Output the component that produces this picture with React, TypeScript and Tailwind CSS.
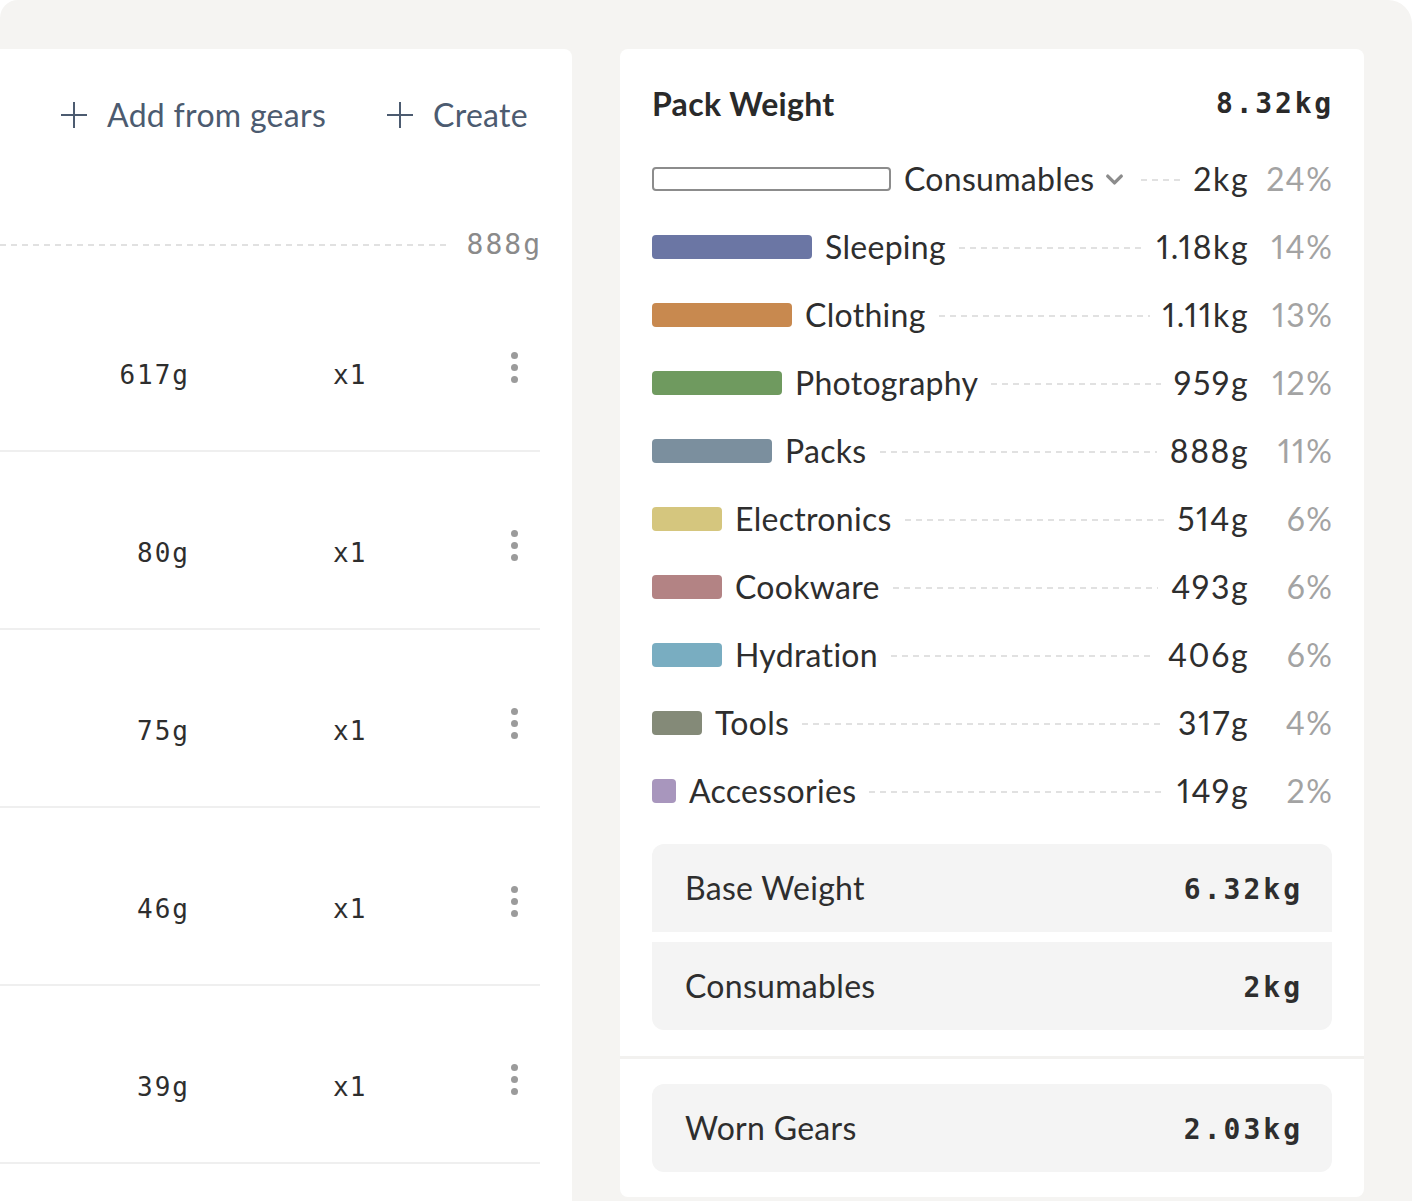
import { ChevronDown } from "lucide-react";

type Category = {
  name: string;
  width: number;
  color: string;
  weight: string;
  pct: string;
  outlined?: boolean;
};

const categories: Array<Category> = [
  { name: "Consumables", width: 239, color: "bg-white", weight: "2kg", pct: "24%", outlined: true },
  { name: "Sleeping", width: 160, color: "bg-[#6b76a4]", weight: "1.18kg", pct: "14%" },
  { name: "Clothing", width: 140, color: "bg-[#c8894f]", weight: "1.11kg", pct: "13%" },
  { name: "Photography", width: 130, color: "bg-[#6f9a5f]", weight: "959g", pct: "12%" },
  { name: "Packs", width: 120, color: "bg-[#7b8f9e]", weight: "888g", pct: "11%" },
  { name: "Electronics", width: 70, color: "bg-[#d5c67e]", weight: "514g", pct: "6%" },
  { name: "Cookware", width: 70, color: "bg-[#b38384]", weight: "493g", pct: "6%" },
  { name: "Hydration", width: 70, color: "bg-[#79adc1]", weight: "406g", pct: "6%" },
  { name: "Tools", width: 50, color: "bg-[#848a78]", weight: "317g", pct: "4%" },
  { name: "Accessories", width: 24, color: "bg-[#a896bd]", weight: "149g", pct: "2%" },
];

const gears = ["617g", "80g", "75g", "46g", "39g"];

const mono = "font-['DejaVu_Sans_Mono',monospace]";
const body = "text-[32px] tracking-[0.3px] proportional-nums";
const num = "text-[32px] tracking-[1.6px] proportional-nums";

const Dashes = ({ className = "" }: { className?: string }) => (
  <div
    className={`h-[2px] bg-[image:repeating-linear-gradient(to_right,#e1e1e1_0_6px,transparent_6px_11px)] ${className}`}
  />
);

const PlusIcon = () => (
  <svg width="28" height="28" viewBox="0 0 28 28" className="text-[#4c5b70]">
    <path d="M14 1v26M1 14h26" stroke="currentColor" strokeWidth="2" fill="none" />
  </svg>
);

const Kebab = () => (
  <div className="flex flex-col gap-[5px] mb-[16px]">
    <span className="w-[7px] h-[7px] rounded-full bg-[#9b9b9b]" />
    <span className="w-[7px] h-[7px] rounded-full bg-[#9b9b9b]" />
    <span className="w-[7px] h-[7px] rounded-full bg-[#9b9b9b]" />
  </div>
);

const GearList = () => (
  <div className="w-[572px] shrink-0 bg-white rounded-tr-lg">
    <div className="pt-[33px] pr-[44px] h-[99px] flex justify-end items-end">
      <div className={`h-[66px] flex items-center gap-[60px] ${body} text-[#4c5b70]`}>
        <button className="flex items-center gap-[19px]">
          <PlusIcon />
          <span>Add from gears</span>
        </button>
        <button className="flex items-center gap-[19px]">
          <PlusIcon />
          <span>Create</span>
        </button>
      </div>
    </div>
    <div className="mt-[72px] h-[50px] pr-[30px] flex items-center gap-[16px]">
      <Dashes className="flex-1" />
      <span className={`${mono} text-[28px] tracking-[2px] text-[#8a8a8a]`}>888g</span>
    </div>
    <div className="mt-[4px] mr-[32px]">
      {gears.map((g) => (
        <div
          key={g}
          className="h-[178px] border-b-2 border-[#efefef] pt-[26px] flex items-center"
        >
          <span className={`${mono} w-[190px] text-right text-[26px] tracking-[2px] text-[#2e2e2e]`}>
            {g}
          </span>
          <span className={`${mono} ml-[143px] text-[26px] tracking-[1px] text-[#2e2e2e]`}>x1</span>
          <div className="ml-auto w-[52px] flex justify-center">
            <Kebab />
          </div>
        </div>
      ))}
    </div>
  </div>
);

const CategoryRow = ({ c }: { c: Category }) => (
  <div className="h-[68px] flex items-center">
    <div
      className={`h-[24px] rounded-[4px] shrink-0 ${c.color} ${
        c.outlined ? "border-2 border-[#8c8c8c] h-[23px]" : ""
      }`}
      style={{ width: c.width }}
    />
    <span className={`ml-[13px] ${body} text-[#2e2e2e]`}>{c.name}</span>
    {c.outlined && (
      <ChevronDown size={27} strokeWidth={3} className="ml-[6px] text-[#8c8c8c] mt-[1px]" />
    )}
    <Dashes className="flex-1 mx-[13px] mt-[2px]" />
    <span className={`${num} text-[#2e2e2e] -mr-[1.6px]`}>{c.weight}</span>
    <span className={`w-[86px] text-right ${num} text-[#a3a3a3] -mr-[1.6px]`}>{c.pct}</span>
  </div>
);

const StatBox = ({ label, value, className }: { label: string; value: string; className: string }) => (
  <div className={`h-[88px] bg-[#f4f4f4] pl-[33px] pr-[29px] flex items-center justify-between ${className}`}>
    <span className={`${body} text-[#2e2e2e]`}>{label}</span>
    <span className={`${mono} font-bold text-[28px] tracking-[3px] text-[#2e2e2e] mt-[4px]`}>
      {value}
    </span>
  </div>
);

const PackWeight = () => (
  <div className="w-[744px] shrink-0 self-start bg-white rounded-lg">
    <div className="px-[32px] pt-[29px] pb-[26px]">
      <div className="h-[52px] flex items-center justify-between">
        <span className={`${body} font-bold text-[#2a2a2a]`}>Pack Weight</span>
        <span className={`${mono} font-bold text-[28px] tracking-[2.8px] text-[#2a2a2a] -mr-[2px]`}>
          8.32kg
        </span>
      </div>
      <div className="mt-[15px]">
        {categories.map((c) => (
          <CategoryRow key={c.name} c={c} />
        ))}
      </div>
      <div className="mt-[19px] flex flex-col gap-[10px]">
        <StatBox label="Base Weight" value="6.32kg" className="rounded-t-xl" />
        <StatBox label="Consumables" value="2kg" className="rounded-b-xl" />
      </div>
    </div>
    <div className="border-t-[3px] border-[#f2f1ef] px-[32px] pt-[25px] pb-[25px]">
      <StatBox label="Worn Gears" value="2.03kg" className="rounded-xl" />
    </div>
  </div>
);

export default function App() {
  return (
    <div className="w-[1412px] h-[1201px] bg-white overflow-hidden font-['Lato',sans-serif]">
      <div className="h-full bg-[#f5f4f2] rounded-tr-[24px] rounded-tl-[18px] pt-[49px] pr-[48px] flex gap-[48px]">
        <GearList />
        <PackWeight />
      </div>
    </div>
  );
}
